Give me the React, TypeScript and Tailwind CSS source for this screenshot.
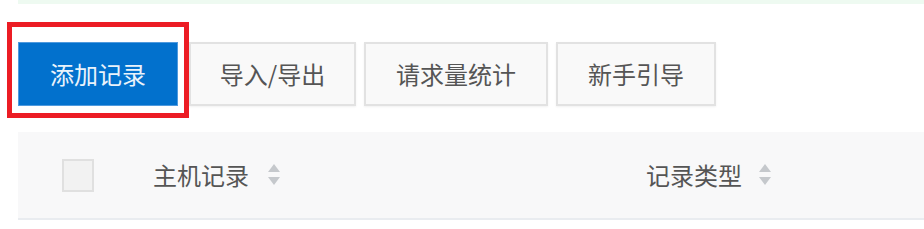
import React from "react";

const font = { fontFamily: '"Noto Sans CJK SC", "Noto Sans", sans-serif' };

function SortIcon() {
  return (
    <svg width="14" height="26" viewBox="0 0 14 26" className="shrink-0">
      <path d="M7 2 L13 10 L1 10 Z" fill="#c5c8cc" />
      <path d="M1 15 L13 15 L7 23 Z" fill="#c5c8cc" />
    </svg>
  );
}

function Btn({ children, w }: { children: React.ReactNode; w: string }) {
  return (
    <div
      className={`${w} h-[64px] flex items-center justify-center border-2 border-[#e2e2e2] bg-[#f9f9f9] text-[24px] text-[#555555] shadow-[0_1px_2px_rgba(0,0,0,0.06)]`}
    >
      {children}
    </div>
  );
}

export default function App() {
  return (
    <div className="relative w-[924px] h-[229px] bg-white overflow-hidden" style={font}>
      <div className="ml-[18px] h-[4px] bg-[#eefaf1]" />
      <div className="flex items-center mt-[38px] ml-[18px]">
        <div className="w-[160px] h-[64px] flex items-center justify-center bg-[#0271cd] border border-[#4f9ade] text-[24px] text-[#eaf3fb]">
          添加记录
        </div>
        <div className="ml-[11px] flex gap-[8px]">
          <Btn w="w-[167px]">导入/导出</Btn>
          <Btn w="w-[184px]">请求量统计</Btn>
          <Btn w="w-[160px]">新手引导</Btn>
        </div>
      </div>
      <div className="mt-[26px] ml-[18px] h-[88px] bg-[#f8f8f9] border-b-2 border-[#e9ecf0] flex items-center">
        <div className="ml-[44px] w-[32px] h-[33px] border-2 border-[#e0e0e0] bg-[#f2f2f2]" />
        <div className="ml-[59px] flex items-center gap-[18px] text-[24px] text-[#555555]">
          <span>主机记录</span>
          <SortIcon />
        </div>
        <div className="ml-[365px] flex items-center gap-[16px] text-[24px] text-[#555555]">
          <span>记录类型</span>
          <SortIcon />
        </div>
      </div>
      <div className="absolute left-[7px] top-[22px] w-[182px] h-[96px] border-[5px] border-[#ec1c24]" />
    </div>
  );
}
